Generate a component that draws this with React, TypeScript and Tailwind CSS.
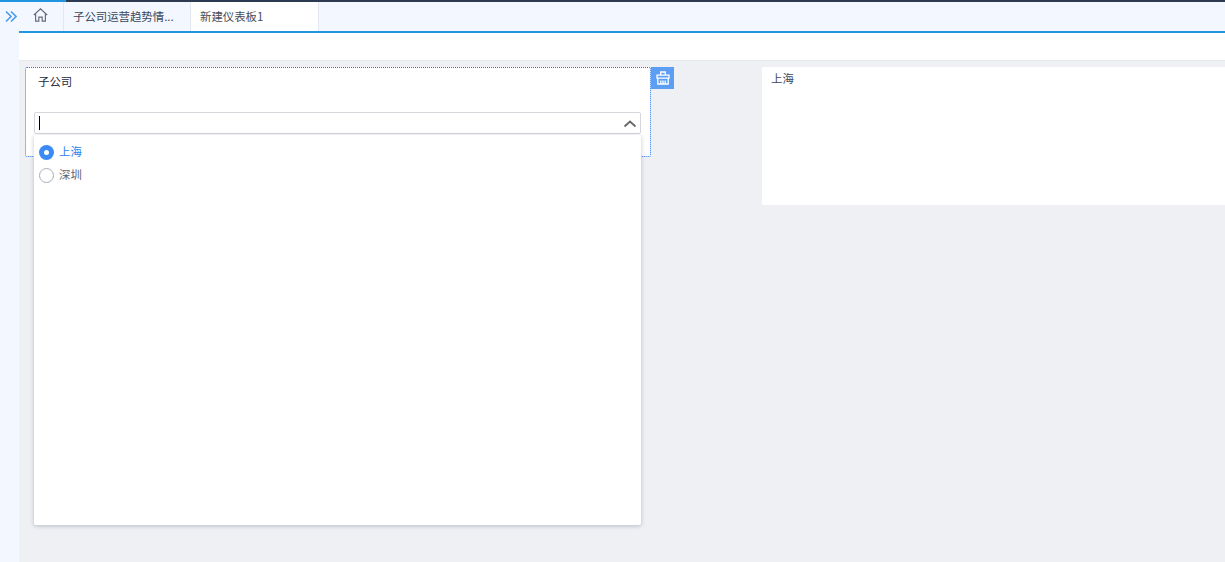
import React from "react";

const font = { fontFamily: '"Noto Sans CJK SC", "Liberation Sans", sans-serif' };

export default function App() {
  return (
    <div className="relative flex h-[562px] w-[1225px] flex-col overflow-hidden bg-[#eef0f4] text-[11.4px]" style={font}>
      <div className="flex h-[2px] shrink-0">
        <div className="w-[66px] bg-[#2196e0]" />
        <div className="flex-1 bg-[#2c3a52]" />
      </div>
      <div className="flex min-h-0 flex-1">
        <aside className="flex w-[19px] shrink-0 justify-center bg-[#f3f7ff] pl-[3px] pt-[8px]">
          <svg width="12" height="13" viewBox="0 0 12 13" fill="none" stroke="#4a9bf0" strokeWidth="1.6">
            <path d="M1 1.5 6 6.5 1 11.5M6 1.5 11 6.5 6 11.5" />
          </svg>
        </aside>
        <main className="flex min-w-0 flex-1 flex-col">
          <div className="flex h-[31px] shrink-0 border-b-2 border-[#2196e0] bg-[#f3f7ff]">
            <div className="flex w-[45px] justify-center border-r border-[#e3e8f0] pr-[2px] pt-[5px]">
              <svg width="15" height="16" viewBox="0 0 15 16" fill="none" stroke="#666e7c" strokeWidth="1.2">
                <path d="M.8 8 7.5 1.8 14.2 8M2.6 6.5v7.7h3.2v-4h3.4v4h3.2V6.5" />
              </svg>
            </div>
            <div className="flex h-[29px] w-[127px] items-center border-r border-[#e3e8f0] pl-[9px] text-[#3d4759]">子公司运营趋势情...</div>
            <div className="flex h-[29px] w-[128px] items-center border-r border-[#e3e8f0] bg-white pl-[9px] text-[#454d5c]">新建仪表板1</div>
          </div>
          <div className="h-[28px] shrink-0 border-b border-[#e8e9ee] bg-white" />
          <div className="relative flex-1">
            <div className="absolute left-[6px] top-[6px] h-[90px] w-[626px] rounded-[2px] border border-dotted border-[#1f74ea] bg-white pl-[12px] pt-[5px] text-[#1f2937]">
              子公司
            </div>
            <div className="absolute left-[632px] top-[6px] flex h-[22px] w-[23px] items-center justify-center bg-[#5b9ef4]">
              <svg width="16" height="16" viewBox="0 0 16 16" fill="none" stroke="white" strokeWidth="1.3">
                <path d="M5.7 5V2h4.6v3M2 5.2h12v3H2zM2.8 8.2V14h10.4V8.2M5.8 14v-3.4M8 14v-3.4M10.2 14v-3.4" />
              </svg>
            </div>
            <div className="absolute left-[15px] top-[51px] flex h-[22px] w-[607px] items-center justify-between rounded-[2px] border border-[#d4d7dc] bg-white pl-[4px] pr-[3px]">
              <div className="h-[14px] w-px bg-black" />
              <svg className="mt-[1px]" width="14" height="14" viewBox="0 0 14 14" fill="none" stroke="#666" strokeWidth="1.7">
                <path d="M1.5 9.5 7 4.5l5.5 5" />
              </svg>
            </div>
            <div className="absolute left-[15px] top-[74px] flex h-[390px] w-[607px] flex-col gap-[5px] rounded-[2px] bg-white pl-[5px] pt-[8px] shadow-[0_1px_4px_rgba(80,90,110,0.35)]">
              <div className="flex h-[18px] items-center gap-[5px] text-[#2f80ed]">
                <span className="flex h-[15px] w-[15px] items-center justify-center rounded-full bg-[#3a8bf5]">
                  <span className="h-[5px] w-[5px] rounded-full bg-white" />
                </span>
                上海
              </div>
              <div className="flex h-[18px] items-center gap-[5px] text-[#5b6472]">
                <span className="h-[15px] w-[15px] rounded-full border border-[#a9aeb8] bg-white" />
                深圳
              </div>
            </div>
            <div className="absolute left-[743px] top-[6px] h-[138px] w-[463px] bg-white pl-[9px] pt-[3px] text-[#3d4759]">上海</div>
          </div>
        </main>
      </div>
    </div>
  );
}
